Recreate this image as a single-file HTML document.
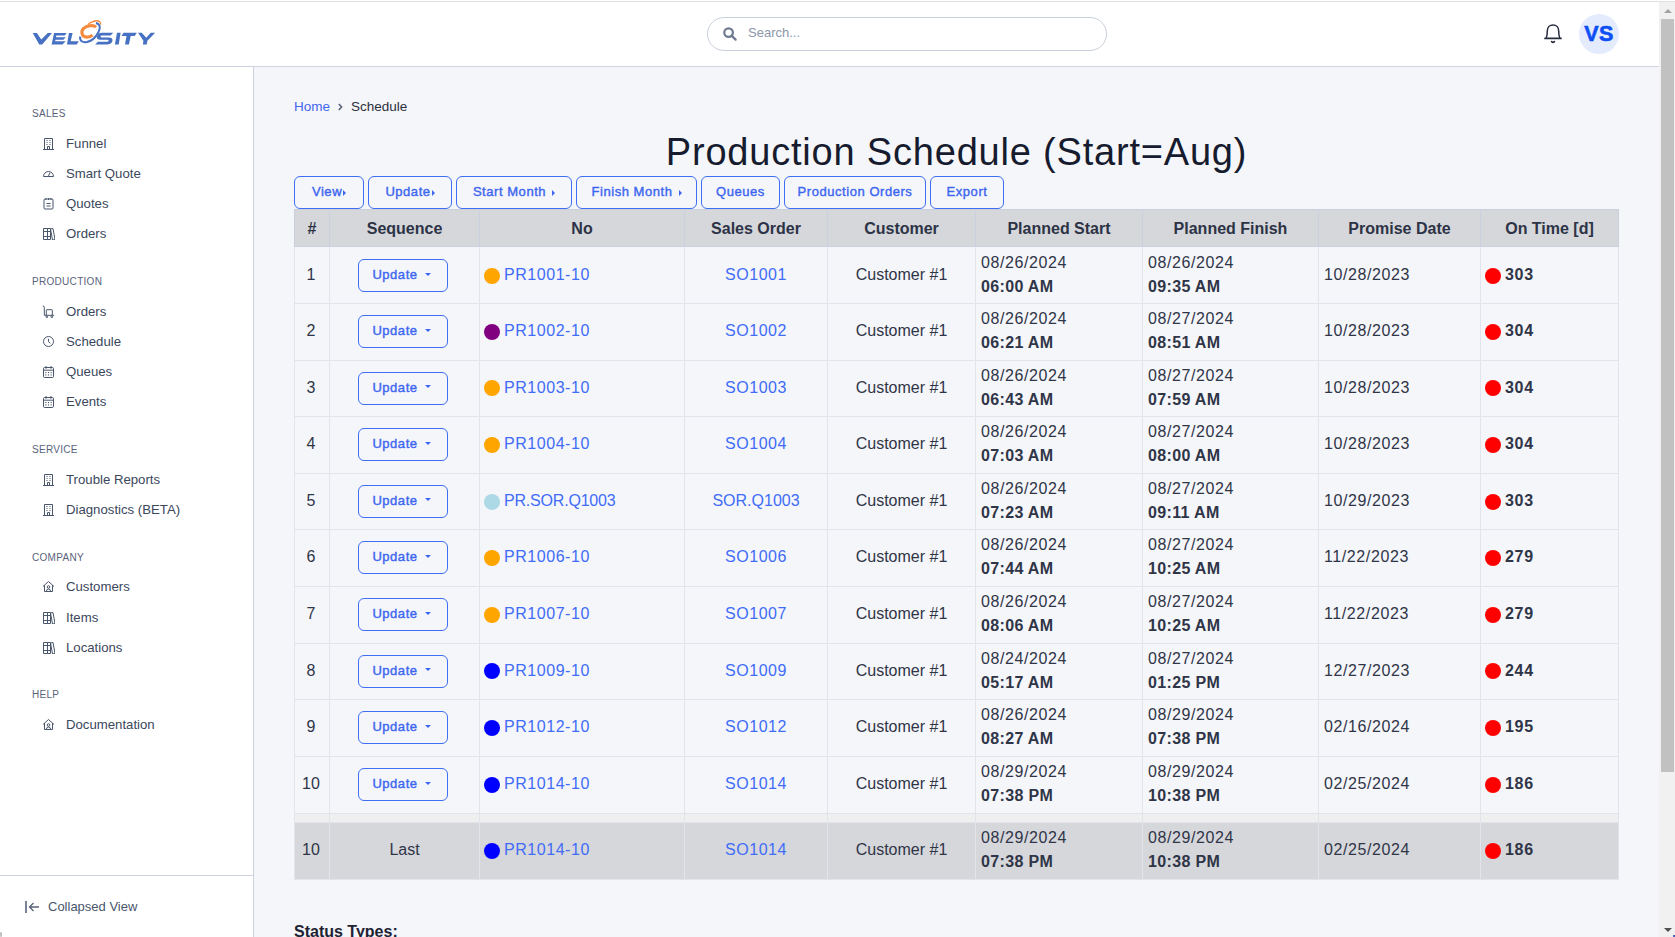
<!DOCTYPE html>
<html><head><meta charset="utf-8">
<style>
*{box-sizing:border-box;margin:0;padding:0}
html,body{width:1675px;height:937px;overflow:hidden;background:#f5f6fa;font-family:"Liberation Sans",sans-serif;color:#2d3446;position:relative}
.topline{position:absolute;left:0;top:0;width:1675px;height:2px;background:#fff;border-bottom:1px solid #dfe2df}
.header{position:absolute;left:0;top:2px;width:1659px;height:65px;background:#fff;border-bottom:1px solid #cdd3e0}
.sidebar{position:absolute;left:0;top:67px;width:254px;height:870px;background:#fff;border-right:1px solid #cdd3e0}
.scroll{position:absolute;left:1659px;top:2px;width:16px;height:935px;background:#f1f1f1}
.thumb{position:absolute;left:2px;top:17px;width:13px;height:753px;background:#c1c1c1}
.uarr{position:absolute;left:4.5px;top:7px;width:0;height:0;border-left:4px solid transparent;border-right:4px solid transparent;border-bottom:4px solid #a3a3a3}
.darr{position:absolute;left:4.5px;top:926px;width:0;height:0;border-left:4px solid transparent;border-right:4px solid transparent;border-top:4px solid #505050}
.search{position:absolute;left:707px;top:15px;width:400px;height:34px;border:1px solid #c9cfdc;border-radius:17px;background:#fff}
.search span{position:absolute;left:40px;top:7px;font-size:13px;color:#8d95aa}
.avatar{position:absolute;left:1579px;top:12px;width:40px;height:40px;border-radius:50%;background:#e3ebfd;color:#0d4ff5;font-weight:bold;font-size:21.5px;text-align:center;line-height:41px;letter-spacing:0.4px;-webkit-text-stroke:0.6px #0d4ff5}
.sec{position:absolute;left:32px;font-size:10px;color:#59627a;letter-spacing:0.3px;margin-top:3px}
.item{position:absolute;left:66px;font-size:13.2px;color:#3a475c;margin-top:0.5px}
.ico{position:absolute;left:42px;width:13px;height:13px;line-height:0}
.sbline{position:absolute;left:0;top:808px;width:253px;height:1px;background:#cdd3e0}
.collapse{position:absolute;left:25px;top:832px;font-size:13px;color:#4a566c}
.collapse svg{position:absolute;left:0;top:2px}
.collapse span{position:absolute;left:23px;top:0;white-space:nowrap}
.crumb{position:absolute;top:98.5px;left:294px;font-size:13.5px;color:#2b3040;white-space:nowrap}
.crumb a{color:#4466ee;text-decoration:none}
.chev{margin:0 7px 0 6px;vertical-align:-1px}
h1{position:absolute;left:254px;width:1405px;top:129px;text-align:center;font-weight:normal;font-size:38px;color:#161b2e;line-height:46px;letter-spacing:0.8px}
.btn{position:absolute;top:176px;height:33px;border:1px solid #3e6ef2;border-radius:6px;color:#3d66f0;font-size:13px;font-weight:normal;-webkit-text-stroke:0.4px #3d66f0;letter-spacing:0.55px;text-align:center;line-height:29.5px;background:#f5f6fa;white-space:nowrap}
.car{display:inline-block;width:0;height:0;border-top:3.5px solid transparent;border-bottom:3.5px solid transparent;border-left:3.5px solid #3d66f0;margin-left:5px;vertical-align:0}
table{position:absolute;left:294px;top:209px;width:1324px;border-collapse:collapse;table-layout:fixed;font-size:16px;color:#2f3547}
th{background:#d6d7db;height:37px;padding-top:2px;font-weight:bold;font-size:16px;color:#2d3346;border:1px solid #cbd0de}
td{border:1px solid #e2e4eb;height:56.6px;padding:0 5px 1.5px;line-height:24px;vertical-align:middle;white-space:nowrap}
td.c{text-align:center}
a.l{color:#406cf7;text-decoration:none}
.dot{display:inline-block;width:16px;height:16px;border-radius:50%;vertical-align:-3.75px;margin-right:4px;margin-left:-1px}
.ub{display:inline-block;position:relative;left:-2px;top:0.5px;width:90px;height:33px;border:1px solid #3e6ef2;border-radius:6px;color:#3d66f0;font-size:13px;font-weight:normal;-webkit-text-stroke:0.4px #3d66f0;letter-spacing:0.55px;line-height:30px;text-align:center;padding-right:2px}
.dcar{display:inline-block;width:0;height:0;border-left:3.2px solid transparent;border-right:3.2px solid transparent;border-top:3.5px solid #3d66f0;margin-left:7px;vertical-align:3.5px}
b{font-weight:bold}
tr.gap td{height:10px;background:#efefef;border-top:0;border-bottom:0}
tr.last td{background:#d6d7db}
.status{position:absolute;left:294px;top:922.5px;font-size:16px;font-weight:bold;color:#1e2333}

td.n{text-align:center;padding:0 2px 1.5px 0}
.ds{letter-spacing:0.6px}
.ts{letter-spacing:0.35px}
a.l{letter-spacing:0.55px}
.ot{letter-spacing:0.7px}
a.l.nsp{letter-spacing:-0.2px}
a.l.nsp0{letter-spacing:0}
tbody tr:first-child td{height:57px;padding-top:1.5px}
tbody tr:nth-child(10) td{height:57.2px}
tr.gap td{height:9.4px}
.blob{position:absolute;left:0;top:932px;width:2px;height:5px;background:#9a9a9a;opacity:.6;border-radius:1px}
.bdot{position:absolute;left:1673px;top:935px;width:2px;height:2px;background:#5068c0}

</style></head><body>
<div class="topline"></div>
<div class="header">
  <svg style="position:absolute;left:0;top:-2px" width="170" height="60" viewBox="0 0 170 60">
   <g fill="#4771c3">
    <path d="M32.7,32.9 H36.9 L41.25,39.6 L47.8,32.9 H52 L42.2,44.4 H39.2 Z"/>
    <path d="M54.1,32.9 H66.9 L64.6,35.5 H56.35 L55.98,37.3 H65.7 L63.5,39.7 H55.47 L55.14,41.3 H65.7 L62.5,44.4 H51.6 Z"/>
    <path d="M68.9,32.9 H72.6 L70.7,41.3 H78.8 L76.7,44.4 H67 Z"/>
    <path d="M102,32.7 H113.2 L110.6,35.6 H101.8 Q100.4,35.6 100.5,36.6 Q100.6,37.5 102,37.5 H108.6 Q112.9,37.5 112.5,40.5 Q112,44.6 106.5,44.6 H95.2 L97.8,41.7 H107 Q108.5,41.7 108.6,40.7 Q108.7,39.75 107.3,39.75 H100.4 Q96.5,39.75 96.9,37 Q97.5,32.7 102,32.7 Z"/>
    <path d="M117,32.8 H120.6 L118.7,44.4 H114.9 Z"/>
    <path d="M123.5,32.8 H136.9 L134.6,35.9 H130.7 L128.9,44.4 H125 L126.5,35.9 H121.6 Z"/>
    <path d="M138.1,32.8 H141.7 L146.3,37.7 L150.7,32.8 H155.2 L147.4,40.8 L146.8,44.4 H142.9 L143.4,40.8 Z"/>
   </g>
   <path transform="translate(0.6,0.9)" d="M95.5,26.2 C93,23.8 86,24.5 83,27.5 C80,30.5 81,36 86,36.2 C88.5,36.3 90.5,35.5 92,34.2" fill="none" stroke="#f68a3c" stroke-width="3.1"/>
   <path d="M87.8,24.8 C91,21.5 97,19.8 99.5,21.5 C100.5,22.3 100.8,23.5 100.6,24.5" fill="none" stroke="#f68a3c" stroke-width="1.4"/>
   <path d="M80.2,36.5 C79.5,41 82.5,43 87,42 C92,41 96,37 98.5,32 C100.5,28 100.5,24 96,23" fill="none" stroke="#4771c3" stroke-width="2"/>
  </svg>

  <div class="search"><svg style="position:absolute;left:15px;top:9px" width="14" height="14" viewBox="0 0 14 14"><circle cx="5.6" cy="5.6" r="4.3" fill="none" stroke="#6f7a92" stroke-width="2.2"/><line x1="8.6" y1="8.6" x2="12.6" y2="12.6" stroke="#6f7a92" stroke-width="2.2" stroke-linecap="round"/></svg><span>Search...</span></div>
  <svg style="position:absolute;left:1542px;top:20px" width="22" height="24" viewBox="0 0 22 24"><path d="M4.2 16 C5.2 14 5.3 12 5.3 9 C5.3 5.2 7.8 3 11 3 C14.2 3 16.7 5.2 16.7 9 C16.7 12 16.8 14 17.8 16" fill="none" stroke="#272d3d" stroke-width="1.5" stroke-linejoin="round"/><line x1="3" y1="16.4" x2="19" y2="16.4" stroke="#272d3d" stroke-width="1.7" stroke-linecap="round"/><path d="M9.6 19.6 Q11 21 12.4 19.6" fill="none" stroke="#272d3d" stroke-width="1.6" stroke-linecap="round"/></svg>
  <div class="avatar">VS</div>
</div>
<div class="sidebar">
<div class="sec" style="top:38px">SALES</div>
<div class="ico" style="top:70px"><svg width="13" height="13" viewBox="0 0 13 13"><path d="M2.5 12.5V1.5H10.5V12.5M1 12.5H12M5.5 12.5V9.5H7.5V12.5" stroke="#4a566c" stroke-width="1" fill="none"/><path d="M4.5 3.5h1M7.5 3.5h1M4.5 5.5h1M7.5 5.5h1M4.5 7.5h1M7.5 7.5h1" stroke="#4a566c" stroke-width="1" fill="none"/></svg></div><div class="item" style="top:68px">Funnel</div>
<div class="ico" style="top:100px"><svg width="13" height="13" viewBox="0 0 13 13"><path d="M1.5 9.5A5 5 0 0 1 11.5 9.5Z" stroke="#4a566c" stroke-width="1" fill="none"/><path d="M6.5 9L8 5.5" stroke="#4a566c" stroke-width="1" fill="none"/></svg></div><div class="item" style="top:98px">Smart Quote</div>
<div class="ico" style="top:130px"><svg width="13" height="13" viewBox="0 0 13 13"><rect x="2" y="2" width="9" height="10" rx="1" stroke="#4a566c" stroke-width="1" fill="none"/><path d="M4 1v2M6.5 1v2M9 1v2M4.5 6.5h4M4.5 9h4" stroke="#4a566c" stroke-width="1" fill="none"/></svg></div><div class="item" style="top:128px">Quotes</div>
<div class="ico" style="top:160px"><svg width="13" height="13" viewBox="0 0 13 13"><path d="M1.5 1.5h4v11h-4zM5.5 1.5h3v11h-3zM8.5 2l2.5-.5 2 11-2.5.5zM1.5 4.5h7M1.5 9.5h7" stroke="#4a566c" stroke-width="1" fill="none"/></svg></div><div class="item" style="top:158px">Orders</div>
<div class="sec" style="top:206px">PRODUCTION</div>
<div class="ico" style="top:238px"><svg width="13" height="13" viewBox="0 0 13 13"><path d="M0.8 1Q2.2 0.9 2.3 2.2V10.3H12.2" stroke="#4a566c" stroke-width="1" fill="none"/><path d="M4.3 10.3V5.2Q4.3 4.7 4.8 4.7H9.8Q10.3 4.7 10.3 5.2V10.3" stroke="#4a566c" stroke-width="1" fill="none"/><circle cx="4.8" cy="11.8" r="0.9" stroke="#4a566c" stroke-width="1" fill="none"/><circle cx="9.8" cy="11.8" r="0.9" stroke="#4a566c" stroke-width="1" fill="none"/></svg></div><div class="item" style="top:236px">Orders</div>
<div class="ico" style="top:268px"><svg width="13" height="13" viewBox="0 0 13 13"><circle cx="6.5" cy="6.5" r="5" stroke="#4a566c" stroke-width="1" fill="none"/><path d="M6.5 3.8v2.9l1.9 1.5" stroke="#4a566c" stroke-width="1" fill="none"/></svg></div><div class="item" style="top:266px">Schedule</div>
<div class="ico" style="top:298px"><svg width="13" height="13" viewBox="0 0 13 13"><rect x="1.5" y="2.5" width="10" height="10" rx="1.2" stroke="#4a566c" stroke-width="1" fill="none"/><path d="M1.5 5.2h10M4 1v2.8M9 1v2.8" stroke="#4a566c" stroke-width="1" fill="none"/><g fill="#4a566c"><rect x="3.3" y="7" width="1.1" height="1.1"/><rect x="5.95" y="7" width="1.1" height="1.1"/><rect x="8.6" y="7" width="1.1" height="1.1"/><rect x="3.3" y="9.4" width="1.1" height="1.1"/><rect x="5.95" y="9.4" width="1.1" height="1.1"/><rect x="8.6" y="9.4" width="1.1" height="1.1"/></g></svg></div><div class="item" style="top:296px">Queues</div>
<div class="ico" style="top:328px"><svg width="13" height="13" viewBox="0 0 13 13"><rect x="1.5" y="2.5" width="10" height="10" rx="1.2" stroke="#4a566c" stroke-width="1" fill="none"/><path d="M1.5 5.2h10M4 1v2.8M9 1v2.8" stroke="#4a566c" stroke-width="1" fill="none"/><g fill="#4a566c"><rect x="3.3" y="7" width="1.1" height="1.1"/><rect x="5.95" y="7" width="1.1" height="1.1"/><rect x="8.6" y="7" width="1.1" height="1.1"/><rect x="3.3" y="9.4" width="1.1" height="1.1"/><rect x="5.95" y="9.4" width="1.1" height="1.1"/><rect x="8.6" y="9.4" width="1.1" height="1.1"/></g></svg></div><div class="item" style="top:326px">Events</div>
<div class="sec" style="top:374px">SERVICE</div>
<div class="ico" style="top:406px"><svg width="13" height="13" viewBox="0 0 13 13"><path d="M2.5 12.5V1.5H10.5V12.5M1 12.5H12M5.5 12.5V9.5H7.5V12.5" stroke="#4a566c" stroke-width="1" fill="none"/><path d="M4.5 3.5h1M7.5 3.5h1M4.5 5.5h1M7.5 5.5h1M4.5 7.5h1M7.5 7.5h1" stroke="#4a566c" stroke-width="1" fill="none"/></svg></div><div class="item" style="top:404px">Trouble Reports</div>
<div class="ico" style="top:436px"><svg width="13" height="13" viewBox="0 0 13 13"><path d="M2.5 12.5V1.5H10.5V12.5M1 12.5H12M5.5 12.5V9.5H7.5V12.5" stroke="#4a566c" stroke-width="1" fill="none"/><path d="M4.5 3.5h1M7.5 3.5h1M4.5 5.5h1M7.5 5.5h1M4.5 7.5h1M7.5 7.5h1" stroke="#4a566c" stroke-width="1" fill="none"/></svg></div><div class="item" style="top:434px">Diagnostics (BETA)</div>
<div class="sec" style="top:482px">COMPANY</div>
<div class="ico" style="top:513px"><svg width="13" height="13" viewBox="0 0 13 13"><path d="M1 6.5L6.5 1.5L12 6.5M2.5 5.2V11.5H10.5V5.2" stroke="#4a566c" stroke-width="1" fill="none"/><circle cx="6.5" cy="7" r="1.3" stroke="#4a566c" stroke-width="1" fill="none"/><path d="M4.3 11.5Q4.5 9 6.5 9Q8.5 9 8.7 11.5" stroke="#4a566c" stroke-width="1" fill="none"/></svg></div><div class="item" style="top:511px">Customers</div>
<div class="ico" style="top:544px"><svg width="13" height="13" viewBox="0 0 13 13"><path d="M1.5 1.5h4v11h-4zM5.5 1.5h3v11h-3zM8.5 2l2.5-.5 2 11-2.5.5zM1.5 4.5h7M1.5 9.5h7" stroke="#4a566c" stroke-width="1" fill="none"/></svg></div><div class="item" style="top:542px">Items</div>
<div class="ico" style="top:574px"><svg width="13" height="13" viewBox="0 0 13 13"><path d="M1.5 1.5h4v11h-4zM5.5 1.5h3v11h-3zM8.5 2l2.5-.5 2 11-2.5.5zM1.5 4.5h7M1.5 9.5h7" stroke="#4a566c" stroke-width="1" fill="none"/></svg></div><div class="item" style="top:572px">Locations</div>
<div class="sec" style="top:619px">HELP</div>
<div class="ico" style="top:651px"><svg width="13" height="13" viewBox="0 0 13 13"><path d="M1 6.5L6.5 1.5L12 6.5M2.5 5.2V11.5H10.5V5.2" stroke="#4a566c" stroke-width="1" fill="none"/><circle cx="6.5" cy="7" r="1.3" stroke="#4a566c" stroke-width="1" fill="none"/><path d="M4.3 11.5Q4.5 9 6.5 9Q8.5 9 8.7 11.5" stroke="#4a566c" stroke-width="1" fill="none"/></svg></div><div class="item" style="top:649px">Documentation</div>
<div class="sbline"></div>
<div class="collapse"><svg width="15" height="12" viewBox="0 0 15 12"><line x1="1" y1="0" x2="1" y2="12" stroke="#59627a" stroke-width="1.6"/><path d="M14 6H4.5M8.5 2L4.5 6L8.5 10" fill="none" stroke="#59627a" stroke-width="1.3"/></svg><span>Collapsed View</span></div>
</div>
<div class="crumb"><a>Home</a><svg class="chev" width="8" height="10" viewBox="0 0 8 10"><path d="M2.8 2L5.6 5L2.8 8" fill="none" stroke="#5a6478" stroke-width="1.6"/></svg>Schedule</div>
<h1>Production Schedule (Start=Aug)</h1>
<div class="btn" style="left:294px;width:70px">View<span class="car" style="margin-left:1px"></span></div>
<div class="btn" style="left:368px;width:84px">Update<span class="car" style="margin-left:1px"></span></div>
<div class="btn" style="left:456px;width:116px">Start Month<span class="car" style="margin-left:6px"></span></div>
<div class="btn" style="left:576px;width:121px">Finish Month<span class="car" style="margin-left:6px"></span></div>
<div class="btn" style="left:701px;width:79px">Queues</div>
<div class="btn" style="left:784px;width:142px">Production Orders</div>
<div class="btn" style="left:930px;width:74px">Export</div>
<table><colgroup>
<col style="width:35px">
<col style="width:150px">
<col style="width:205px">
<col style="width:143px">
<col style="width:148px">
<col style="width:167px">
<col style="width:176px">
<col style="width:162px">
<col style="width:138px">
</colgroup><thead><tr>
<th>#</th>
<th>Sequence</th>
<th>No</th>
<th>Sales Order</th>
<th>Customer</th>
<th>Planned Start</th>
<th>Planned Finish</th>
<th>Promise Date</th>
<th>On Time [d]</th>
</tr></thead><tbody>
<tr class=""><td class="n">1</td><td class="c"><span class="ub">Update<span class="dcar"></span></span></td><td><span class="dot" style="background:#ffa500"></span><a class="l">PR1001-10</a></td><td class="c"><a class="l">SO1001</a></td><td class="c">Customer #1</td><td><span class="ds">08/26/2024</span><br><b class="ts">06:00 AM</b></td><td><span class="ds">08/26/2024</span><br><b class="ts">09:35 AM</b></td><td><span class="ds">10/28/2023</span></td><td><span class="dot" style="background:#ff0000"></span><b class="ot">303</b></td></tr>
<tr class=""><td class="n">2</td><td class="c"><span class="ub">Update<span class="dcar"></span></span></td><td><span class="dot" style="background:#800080"></span><a class="l">PR1002-10</a></td><td class="c"><a class="l">SO1002</a></td><td class="c">Customer #1</td><td><span class="ds">08/26/2024</span><br><b class="ts">06:21 AM</b></td><td><span class="ds">08/27/2024</span><br><b class="ts">08:51 AM</b></td><td><span class="ds">10/28/2023</span></td><td><span class="dot" style="background:#ff0000"></span><b class="ot">304</b></td></tr>
<tr class=""><td class="n">3</td><td class="c"><span class="ub">Update<span class="dcar"></span></span></td><td><span class="dot" style="background:#ffa500"></span><a class="l">PR1003-10</a></td><td class="c"><a class="l">SO1003</a></td><td class="c">Customer #1</td><td><span class="ds">08/26/2024</span><br><b class="ts">06:43 AM</b></td><td><span class="ds">08/27/2024</span><br><b class="ts">07:59 AM</b></td><td><span class="ds">10/28/2023</span></td><td><span class="dot" style="background:#ff0000"></span><b class="ot">304</b></td></tr>
<tr class=""><td class="n">4</td><td class="c"><span class="ub">Update<span class="dcar"></span></span></td><td><span class="dot" style="background:#ffa500"></span><a class="l">PR1004-10</a></td><td class="c"><a class="l">SO1004</a></td><td class="c">Customer #1</td><td><span class="ds">08/26/2024</span><br><b class="ts">07:03 AM</b></td><td><span class="ds">08/27/2024</span><br><b class="ts">08:00 AM</b></td><td><span class="ds">10/28/2023</span></td><td><span class="dot" style="background:#ff0000"></span><b class="ot">304</b></td></tr>
<tr class=""><td class="n">5</td><td class="c"><span class="ub">Update<span class="dcar"></span></span></td><td><span class="dot" style="background:#add8e6"></span><a class="l nsp">PR.SOR.Q1003</a></td><td class="c"><a class="l nsp0">SOR.Q1003</a></td><td class="c">Customer #1</td><td><span class="ds">08/26/2024</span><br><b class="ts">07:23 AM</b></td><td><span class="ds">08/27/2024</span><br><b class="ts">09:11 AM</b></td><td><span class="ds">10/29/2023</span></td><td><span class="dot" style="background:#ff0000"></span><b class="ot">303</b></td></tr>
<tr class=""><td class="n">6</td><td class="c"><span class="ub">Update<span class="dcar"></span></span></td><td><span class="dot" style="background:#ffa500"></span><a class="l">PR1006-10</a></td><td class="c"><a class="l">SO1006</a></td><td class="c">Customer #1</td><td><span class="ds">08/26/2024</span><br><b class="ts">07:44 AM</b></td><td><span class="ds">08/27/2024</span><br><b class="ts">10:25 AM</b></td><td><span class="ds">11/22/2023</span></td><td><span class="dot" style="background:#ff0000"></span><b class="ot">279</b></td></tr>
<tr class=""><td class="n">7</td><td class="c"><span class="ub">Update<span class="dcar"></span></span></td><td><span class="dot" style="background:#ffa500"></span><a class="l">PR1007-10</a></td><td class="c"><a class="l">SO1007</a></td><td class="c">Customer #1</td><td><span class="ds">08/26/2024</span><br><b class="ts">08:06 AM</b></td><td><span class="ds">08/27/2024</span><br><b class="ts">10:25 AM</b></td><td><span class="ds">11/22/2023</span></td><td><span class="dot" style="background:#ff0000"></span><b class="ot">279</b></td></tr>
<tr class=""><td class="n">8</td><td class="c"><span class="ub">Update<span class="dcar"></span></span></td><td><span class="dot" style="background:#0000ff"></span><a class="l">PR1009-10</a></td><td class="c"><a class="l">SO1009</a></td><td class="c">Customer #1</td><td><span class="ds">08/24/2024</span><br><b class="ts">05:17 AM</b></td><td><span class="ds">08/27/2024</span><br><b class="ts">01:25 PM</b></td><td><span class="ds">12/27/2023</span></td><td><span class="dot" style="background:#ff0000"></span><b class="ot">244</b></td></tr>
<tr class=""><td class="n">9</td><td class="c"><span class="ub">Update<span class="dcar"></span></span></td><td><span class="dot" style="background:#0000ff"></span><a class="l">PR1012-10</a></td><td class="c"><a class="l">SO1012</a></td><td class="c">Customer #1</td><td><span class="ds">08/26/2024</span><br><b class="ts">08:27 AM</b></td><td><span class="ds">08/29/2024</span><br><b class="ts">07:38 PM</b></td><td><span class="ds">02/16/2024</span></td><td><span class="dot" style="background:#ff0000"></span><b class="ot">195</b></td></tr>
<tr class=""><td class="n">10</td><td class="c"><span class="ub">Update<span class="dcar"></span></span></td><td><span class="dot" style="background:#0000ff"></span><a class="l">PR1014-10</a></td><td class="c"><a class="l">SO1014</a></td><td class="c">Customer #1</td><td><span class="ds">08/29/2024</span><br><b class="ts">07:38 PM</b></td><td><span class="ds">08/29/2024</span><br><b class="ts">10:38 PM</b></td><td><span class="ds">02/25/2024</span></td><td><span class="dot" style="background:#ff0000"></span><b class="ot">186</b></td></tr>
<tr class="gap"><td></td><td></td><td></td><td></td><td></td><td></td><td></td><td></td><td></td></tr>
<tr class="last"><td class="n">10</td><td class="c">Last</td><td><span class="dot" style="background:#0000ff"></span><a class="l">PR1014-10</a></td><td class="c"><a class="l">SO1014</a></td><td class="c">Customer #1</td><td><span class="ds">08/29/2024</span><br><b class="ts">07:38 PM</b></td><td><span class="ds">08/29/2024</span><br><b class="ts">10:38 PM</b></td><td><span class="ds">02/25/2024</span></td><td><span class="dot" style="background:#ff0000"></span><b class="ot">186</b></td></tr>
</tbody></table>
<div class="status">Status Types:</div>
<div class="scroll"><div class="uarr"></div><div class="thumb"></div><div class="darr"></div></div>
<div class="blob"></div><div class="bdot"></div>
</body></html>
